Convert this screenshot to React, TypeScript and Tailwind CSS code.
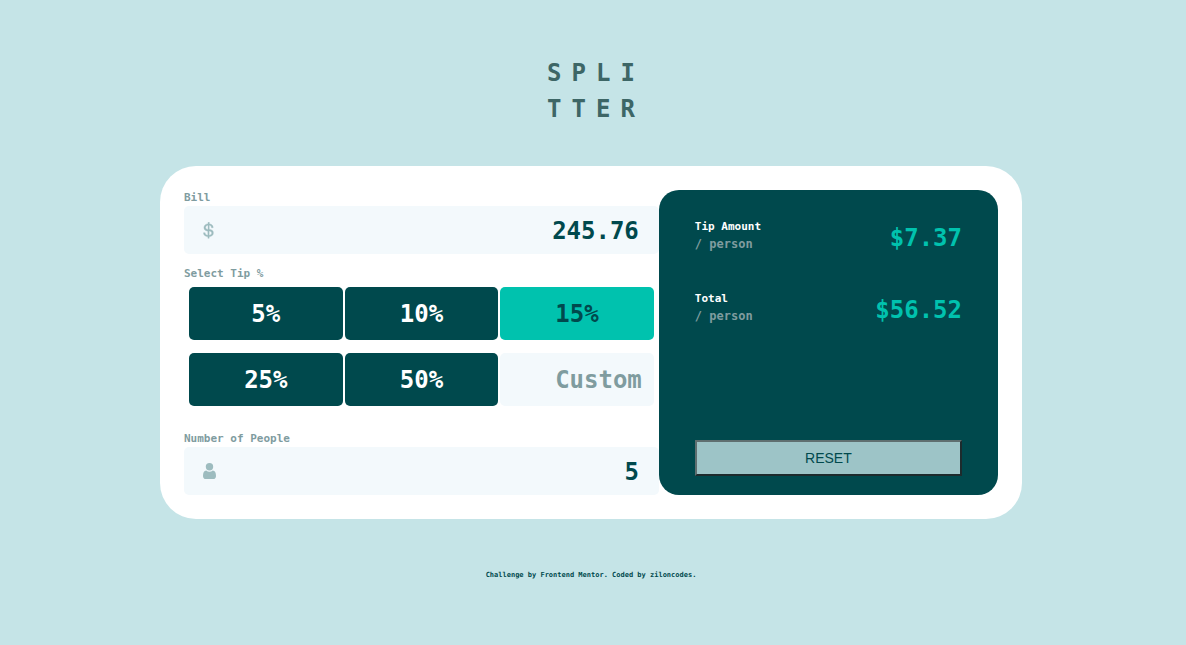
import { useState } from 'react';

const MONO = "font-['DejaVu_Sans_Mono','Liberation_Mono',monospace]";
const LABEL = 'block text-[11px] leading-4 font-bold text-[#7f9c9f]';
const FIELD =
  'h-12 w-full rounded-[5px] bg-[#f3f9fc] pt-[2px] pl-12 pr-5 text-right text-2xl font-bold text-[#00494d] outline-none';

function DollarIcon() {
  return (
    <svg width="11" height="17" viewBox="0 0 11 17" aria-hidden="true">
      <path
        fill="#9dbcbf"
        stroke="#9dbcbf"
        strokeWidth="0.3"
        d="M6.16 16.34v-1.53c1.3-.14 2.33-.55 3.1-1.22.78-.68 1.16-1.58 1.16-2.7 0-1.08-.33-1.91-1-2.5-.66-.58-1.72-.97-3.18-1.17V3.3c.7.1 1.26.37 1.66.8.4.4.61.94.61 1.6h1.7c0-1.15-.35-2.06-1.04-2.74-.69-.68-1.63-1.09-2.83-1.23V.13H5.02v1.58c-1.27.13-2.27.53-3 1.19-.75.66-1.12 1.54-1.12 2.63 0 2.14 1.3 3.36 3.93 3.66v4.1c-.83-.1-1.49-.39-1.97-.85-.48-.47-.72-1.04-.72-1.7H.42c0 1.16.41 2.1 1.22 2.84.82.73 1.91 1.15 3.27 1.26v1.5h1.25zM5.02 7.42C3.43 7.19 2.64 6.55 2.64 5.5c0-.6.22-1.1.65-1.5.44-.4 1.01-.64 1.73-.72v4.14zm1.14 5.87v-4.4c1.67.23 2.5.9 2.5 2.02 0 .63-.22 1.17-.67 1.6-.45.44-1.06.7-1.83.78z"
      />
    </svg>
  );
}

function PersonIcon() {
  return (
    <svg width="13" height="16" viewBox="0 0 13 16" aria-hidden="true">
      <g fill="#9dbcbf">
        <circle cx="6.5" cy="3.7" r="3.7" />
        <path d="M3.2 7.5c1 .8 2.100 1.200 3.300 1.200s2.300-.4 3.300-1.200C12 7.700 13 9.700 13 12.900c0 2-1.100 3.100-2.800 3.100H2.800C1.100 16 0 14.900 0 12.900 0 9.700 1 7.700 3.200 7.500z" />
      </g>
    </svg>
  );
}

function Result({ name, value }: { name: string; value: string }) {
  return (
    <div className="flex items-start justify-between">
      <div className="font-bold">
        <p className="text-[11px] leading-4 text-white">{name}</p>
        <p className="text-xs leading-[18px] text-[#7f9c9f]">/ person</p>
      </div>
      <output className="text-2xl leading-[38px] font-bold text-[#00c2ae]">{value}</output>
    </div>
  );
}

export default function App() {
  const [bill, setBill] = useState('245.76');
  const [people, setPeople] = useState('5');
  const [tip, setTip] = useState(15);
  const [custom, setCustom] = useState('');

  const count = Number(people) || 0;
  const total = Number(bill) || 0;
  const perTip = count ? (total * (custom ? Number(custom) : tip)) / 100 / count : 0;
  const perTotal = count ? total / count + perTip : 0;
  const down = (n: number) => '$' + (Math.floor(n * 100) / 100).toFixed(2);

  const reset = () => {
    setBill('');
    setPeople('');
    setCustom('');
    setTip(0);
  };

  const tipButton = (n: number) => (
    <button
      key={n}
      type="button"
      aria-pressed={tip === n}
      onClick={() => {
        setTip(n);
        setCustom('');
      }}
      className={
        tip === n
          ? 'h-[53px] rounded-[5px] bg-[#00c2ae] text-2xl font-bold text-[#00494d]'
          : 'h-[53px] rounded-[5px] bg-[#00494d] text-2xl font-bold text-white'
      }
    >
      {n}%
    </button>
  );

  return (
    <div className={`${MONO} flex min-h-screen flex-col items-center bg-[#c5e4e7] pt-[55px] pr-1`}>
      <h1
        aria-label="Splitter"
        className="grid grid-cols-4 gap-x-[10px] text-center text-2xl leading-9 font-bold text-[#3d6666]"
      >
        {'SPLITTER'.split('').map((letter, i) => (
          <span key={i}>{letter}</span>
        ))}
      </h1>

      <main className="mt-[39px] grid w-full max-w-[862px] grid-cols-[7fr_5fr] rounded-[36px] bg-white p-6">
        <form className="min-w-0" onSubmit={(e) => e.preventDefault()}>
          <label htmlFor="bill" className={LABEL}>
            Bill
          </label>
          <div className="relative">
            <span className="absolute top-4 left-[19px]">
              <DollarIcon />
            </span>
            <input id="bill" value={bill} onChange={(e) => setBill(e.target.value)} className={FIELD} />
          </div>

          <fieldset className="mt-3">
            <legend className={LABEL}>Select Tip %</legend>
            <div className="grid grid-cols-3 gap-x-[2px] gap-y-[13px] px-[5px] pt-[5px]">
              {[5, 10, 15, 25, 50].map(tipButton)}
              <input
                aria-label="Custom tip"
                placeholder="Custom"
                value={custom}
                onChange={(e) => setCustom(e.target.value)}
                className="h-[53px] w-full min-w-0 rounded-[5px] bg-[#f3f9fc] px-3 text-right text-2xl font-bold text-[#00494d] outline-none placeholder:text-[#7f9c9f]"
              />
            </div>
          </fieldset>

          <label htmlFor="people" className={`${LABEL} mt-[25px]`}>
            Number of People
          </label>
          <div className="relative">
            <span className="absolute top-4 left-[19px]">
              <PersonIcon />
            </span>
            <input id="people" value={people} onChange={(e) => setPeople(e.target.value)} className={FIELD} />
          </div>
        </form>

        <section className="flex min-w-0 flex-col rounded-[20px] bg-[#00494d] px-9 pt-[29px] pb-[19px]">
          <div className="flex flex-col gap-[34px]">
            <Result name="Tip Amount" value={down(perTip)} />
            <Result name="Total" value={down(perTotal)} />
          </div>
          <button
            type="button"
            onClick={reset}
            className="mt-auto h-9 border-2 border-t-[#5f6f70] border-r-[#1d2b2d] border-b-[#1d2b2d] border-l-[#5f6f70] bg-[#9dc4c7] font-['Liberation_Sans',sans-serif] text-sm text-[#00494d]"
          >
            RESET
          </button>
        </section>
      </main>

      <footer className="mt-[50px] text-[7px] leading-3 font-bold text-[#00494d]">
        Challenge by <a href="#mentor">Frontend Mentor</a>. Coded by <a href="#author">ziloncodes</a>.
      </footer>
    </div>
  );
}
